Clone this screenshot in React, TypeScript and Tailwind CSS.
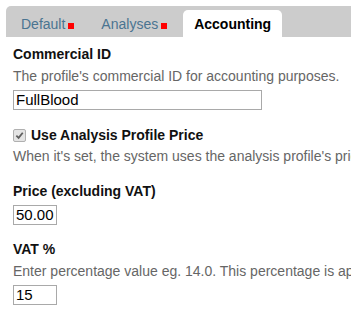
import { useState } from "react";

const tabs = [
  { name: "Default", dirty: true },
  { name: "Analyses", dirty: true },
  { name: "Accounting", dirty: false },
];

function Field({
  label,
  help,
  children,
}: {
  label: string;
  help?: string;
  children: React.ReactNode;
}) {
  return (
    <div className="mb-[15px]">
      <div className="h-[20px] leading-[18px] font-bold text-[#111]">{label}</div>
      {help && <div className="mt-[2px] h-[20px] leading-[18px] text-[#666]">{help}</div>}
      <div className="mt-[3px] flex">{children}</div>
    </div>
  );
}

export default function App() {
  const [active, setActive] = useState("Accounting");
  const [commercialId, setCommercialId] = useState("FullBlood");
  const [price, setPrice] = useState("50.00");
  const [vat, setVat] = useState("15");

  return (
    <div className="w-[351px] h-[324px] overflow-hidden bg-white whitespace-nowrap text-[14px] font-['Liberation_Sans',Arial,sans-serif]">
      {/* tab bar */}
      <div className="pt-[6px] pl-[6px]">
        <div className="flex items-end gap-[5px] h-[31px] pl-[4px] bg-[#cccccc] rounded-tl-[5px]">
          {tabs.map((t) => {
            const isActive = t.name === active;
            return (
              <button
                key={t.name}
                onClick={() => setActive(t.name)}
                className={`flex items-end h-[27px] px-[11px] pt-[4px] pb-[3px] leading-[20px] rounded-t-[5px] ${
                  isActive ? "bg-white font-bold text-black" : "text-[#4a7491]"
                }`}
              >
                <span>{t.name}</span>
                {t.dirty && <span className="ml-[3px] mb-[5px] w-[6px] h-[6px] bg-[#ff0000]" />}
              </button>
            );
          })}
        </div>
      </div>

      {/* form */}
      <div className="pl-[13px] pt-[8px]">
        <Field label="Commercial ID" help="The profile's commercial ID for accounting purposes.">
          <input
            value={commercialId}
            onChange={(e) => setCommercialId(e.target.value)}
            className="w-[249px] h-[20px] px-[2px] border border-[#a9a9a9] text-[15px] text-black outline-none"
          />
        </Field>

        <div className="mb-[15px]">
          <div className="flex items-center h-[20px] leading-[18px] font-bold text-[#111]">
            <span className="flex items-center justify-center w-[13px] h-[13px] mr-[5px] rounded-[2px] border border-[#b0b0b0] bg-[#e4e4e4]">
              <svg viewBox="0 0 10 10" className="w-[9px] h-[9px]">
                <path d="M1.5 5.2 L4 7.6 L8.6 2" fill="none" stroke="#5f5f5f" strokeWidth="2" />
              </svg>
            </span>
            Use Analysis Profile Price
          </div>
          <div className="mt-[2px] h-[20px] leading-[18px] text-[#666]">
            When it's set, the system uses the analysis profile's price to quote and the system's VAT is overridden by the analysis profile's specific VAT
          </div>
        </div>

        <Field label="Price (excluding VAT)">
          <input
            value={price}
            onChange={(e) => setPrice(e.target.value)}
            className="w-[44px] h-[20px] px-[2px] border border-[#a9a9a9] text-[15px] text-black outline-none"
          />
        </Field>

        <Field
          label="VAT %"
          help="Enter percentage value eg. 14.0. This percentage is applied on the Profile only, overriding the systems VAT"
        >
          <input
            value={vat}
            onChange={(e) => setVat(e.target.value)}
            className="w-[44px] h-[20px] px-[2px] border border-[#a9a9a9] text-[15px] text-black outline-none"
          />
        </Field>
      </div>
    </div>
  );
}
